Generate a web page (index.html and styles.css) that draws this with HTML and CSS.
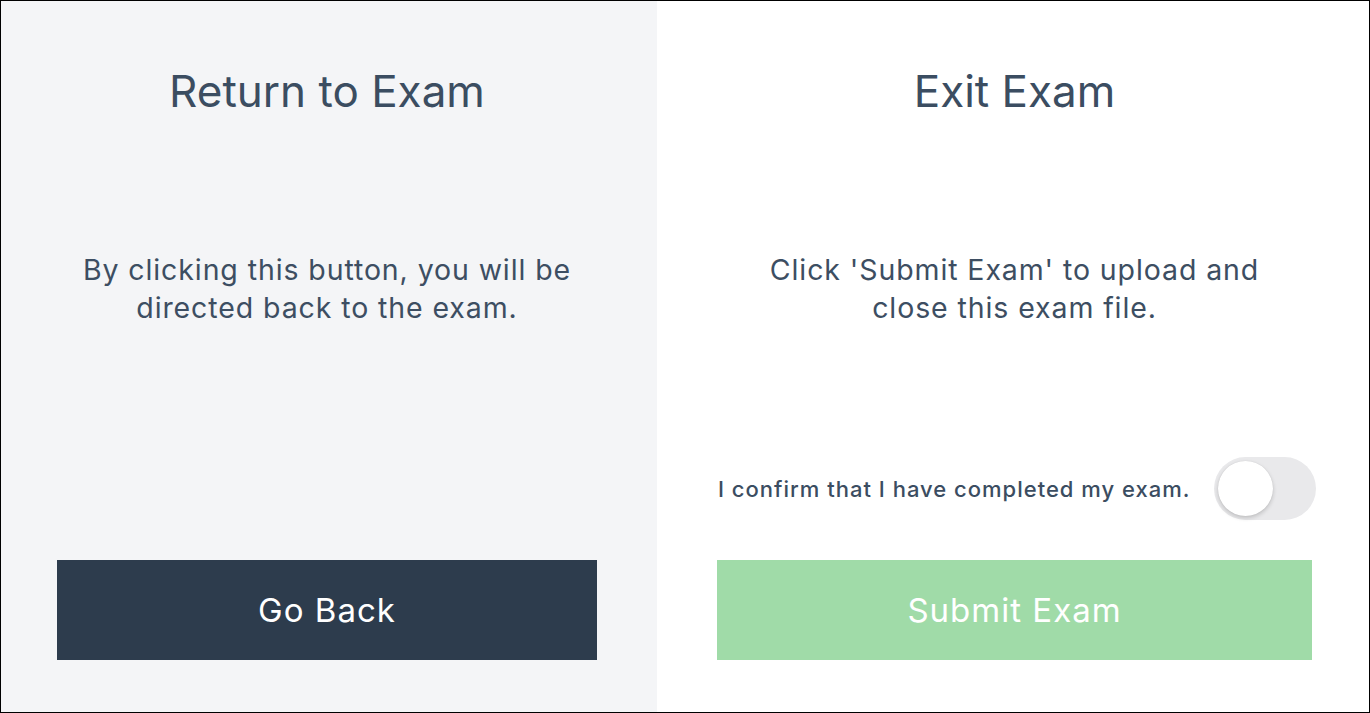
FILE: index.html
```html
<!DOCTYPE html>
<html>
<head>
<meta charset="utf-8">
<link rel="stylesheet" href="styles.css">
</head>
<body>
<div class="frame">
  <section class="panel panel-left">
    <h1 class="title">Return to Exam</h1>
    <p class="desc">By clicking this button, you will be directed back to the exam.</p>
    <button class="btn btn-dark">Go Back</button>
  </section>
  <section class="panel panel-right">
    <h1 class="title">Exit Exam</h1>
    <p class="desc">Click 'Submit Exam' to upload and close this exam file.</p>
    <div class="confirm">
      <span class="confirm-text">I confirm that I have completed my exam.</span>
      <span class="toggle"><span class="knob"></span></span>
    </div>
    <button class="btn btn-green">Submit Exam</button>
  </section>
</div>
</body>
</html>
```
FILE: styles.css
```css
* { box-sizing: border-box; }
html, body { margin: 0; padding: 0; }
body {
  font-family: Inter, "Noto Sans", sans-serif;
  color: #3d4e62;
  background: #fff;
}
.frame {
  width: 1370px;
  height: 713px;
  border: 1px solid #000;
  display: grid;
  grid-template-columns: 656px 1fr;
}
.panel {
  display: flex;
  flex-direction: column;
  align-items: stretch;
  padding-bottom: 52px;
}
.panel-left {
  background: #f4f5f7;
  padding-left: 56px;
  padding-right: 60px;
}
.panel-right {
  background: #fff;
  padding-left: 60px;
  padding-right: 57px;
}
.title {
  margin: 60px 0 0;
  height: 60px;
  line-height: 60px;
  font-size: 44px;
  font-weight: 400;
  text-align: center;
  color: #3b4d61;
}
.desc {
  margin: 130px auto 0;
  max-width: 520px;
  font-size: 28.5px;
  letter-spacing: 0.9px;
  line-height: 38px;
  text-align: center;
}
.confirm {
  margin-top: auto;
  margin-right: -4px;
  margin-bottom: 40px;
  display: flex;
  align-items: center;
  justify-content: space-between;
  padding-left: 1px;
}
.confirm-text {
  font-size: 22px;
  letter-spacing: 1px;
  font-weight: 500;
  color: #3b4d61;
}
.toggle {
  width: 102px;
  height: 63px;
  border-radius: 32px;
  background: #e9e9eb;
  position: relative;
  display: block;
}
.knob {
  position: absolute;
  left: 4px;
  top: 4px;
  width: 55px;
  height: 55px;
  border-radius: 50%;
  background: #fff;
  box-shadow: 0 2px 4px rgba(0,0,0,0.18), 0 0 1px rgba(0,0,0,0.12);
}
.btn {
  height: 100px;
  border: none;
  font-family: inherit;
  font-size: 33px;
  letter-spacing: 1px;
  color: #fff;
  cursor: pointer;
}
.btn-dark {
  margin-top: auto;
  background: #2d3c4d;
}
.btn-green {
  background: #a0dba8;
}
```
